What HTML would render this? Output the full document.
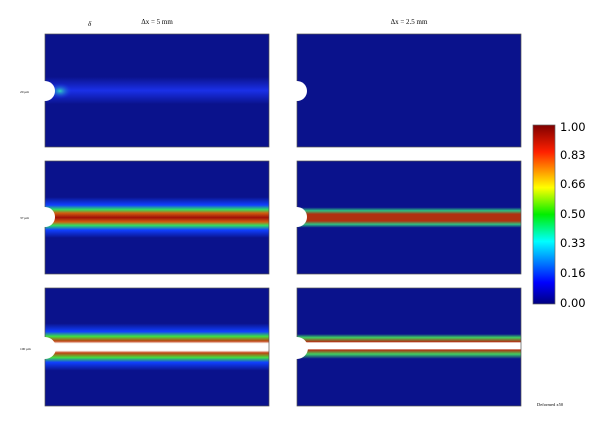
<!DOCTYPE html><html><head><style>body{margin:0;background:#fff;width:600px;height:441px;overflow:hidden}</style></head><body>
<svg width="600" height="441" xmlns="http://www.w3.org/2000/svg" font-family="Liberation Serif, serif">
<defs>
<linearGradient id="jet" x1="0" y1="1" x2="0" y2="0">
<stop offset="0" stop-color="#00007f"/><stop offset="0.12" stop-color="#0000ff"/><stop offset="0.35" stop-color="#00ffff"/><stop offset="0.5" stop-color="#00ee00"/><stop offset="0.65" stop-color="#ffff00"/><stop offset="0.85" stop-color="#ff2000"/><stop offset="1" stop-color="#7f0000"/>
</linearGradient>
<radialGradient id="glow" cx="0.5" cy="0.5" r="0.5"><stop offset="0" stop-color="#30d0c0"/><stop offset="1" stop-color="#1a30e8" stop-opacity="0"/></radialGradient>
<linearGradient id="g1" x1="0" y1="0" x2="0" y2="1"><stop offset="0.38" stop-color="#0a128c"/><stop offset="0.5" stop-color="#1a30e8"/><stop offset="0.62" stop-color="#0a128c"/></linearGradient>
<linearGradient id="g2" x1="0" y1="0" x2="0" y2="1"><stop offset="0.32" stop-color="#0a128c"/><stop offset="0.39" stop-color="#1040ff"/><stop offset="0.43" stop-color="#30e060"/><stop offset="0.46" stop-color="#d06010"/><stop offset="0.5" stop-color="#a01008"/><stop offset="0.54" stop-color="#d06010"/><stop offset="0.57" stop-color="#30e060"/><stop offset="0.61" stop-color="#1040ff"/><stop offset="0.68" stop-color="#0a128c"/></linearGradient>
<linearGradient id="g2r" x1="0" y1="0" x2="0" y2="1"><stop offset="0.41" stop-color="#0a128c"/><stop offset="0.44" stop-color="#30c080"/><stop offset="0.47" stop-color="#b03010"/><stop offset="0.53" stop-color="#b03010"/><stop offset="0.56" stop-color="#30c080"/><stop offset="0.59" stop-color="#0a128c"/></linearGradient>
<linearGradient id="g3" x1="0" y1="0" x2="0" y2="1"><stop offset="0.3" stop-color="#0a128c"/><stop offset="0.37" stop-color="#1040ff"/><stop offset="0.41" stop-color="#40e040"/><stop offset="0.45" stop-color="#c04010"/><stop offset="0.47" stop-color="#ffffff"/><stop offset="0.53" stop-color="#ffffff"/><stop offset="0.55" stop-color="#c04010"/><stop offset="0.59" stop-color="#40e040"/><stop offset="0.63" stop-color="#1040ff"/><stop offset="0.7" stop-color="#0a128c"/></linearGradient>
<linearGradient id="g3r" x1="0" y1="0" x2="0" y2="1"><stop offset="0.39" stop-color="#0a128c"/><stop offset="0.42" stop-color="#40d060"/><stop offset="0.455" stop-color="#b03010"/><stop offset="0.465" stop-color="#fff"/><stop offset="0.515" stop-color="#fff"/><stop offset="0.525" stop-color="#b03010"/><stop offset="0.56" stop-color="#40d060"/><stop offset="0.6" stop-color="#0a128c"/></linearGradient>
</defs>
<text x="88" y="26" font-size="7" font-style="italic">δ</text>
<text x="157" y="24" font-size="7" text-anchor="middle">Δx = 5 mm</text>
<text x="409" y="24" font-size="7" text-anchor="middle">Δx = 2.5 mm</text>
<g font-size="3.5"><text x="20" y="93">20 μm</text><text x="20" y="219">37 μm</text><text x="20" y="350">100 μm</text></g>
<g stroke="#555" stroke-width="0.7">
<rect x="45" y="34" width="224" height="113" fill="url(#g1)"/>
<rect x="297" y="34" width="224" height="113" fill="#0a128c"/>
<rect x="45" y="161" width="224" height="113" fill="url(#g2)"/>
<rect x="297" y="161" width="224" height="113" fill="url(#g2r)"/>
<rect x="45" y="288" width="224" height="118" fill="url(#g3)"/>
<rect x="297" y="288" width="224" height="118" fill="url(#g3r)"/>
</g>
<ellipse cx="60" cy="91" rx="12" ry="8" fill="url(#glow)"/>
<g fill="#fff"><circle cx="45" cy="91" r="10"/><circle cx="297" cy="91" r="10"/><circle cx="45" cy="217" r="10"/><circle cx="297" cy="217" r="10"/><circle cx="45" cy="348" r="11"/><circle cx="297" cy="348" r="11"/></g>
<rect x="533" y="125" width="22" height="179" fill="url(#jet)" stroke="#666" stroke-width="0.7"/>
<g font-family="DejaVu Sans, sans-serif" font-size="11.5"><text x="560" y="131">1.00</text><text x="560" y="159">0.83</text><text x="560" y="188">0.66</text><text x="560" y="218">0.50</text><text x="560" y="247">0.33</text><text x="560" y="277">0.16</text><text x="560" y="307">0.00</text></g>
<text x="537" y="406" font-size="4.5">Deformed x50</text>
</svg></body></html>
